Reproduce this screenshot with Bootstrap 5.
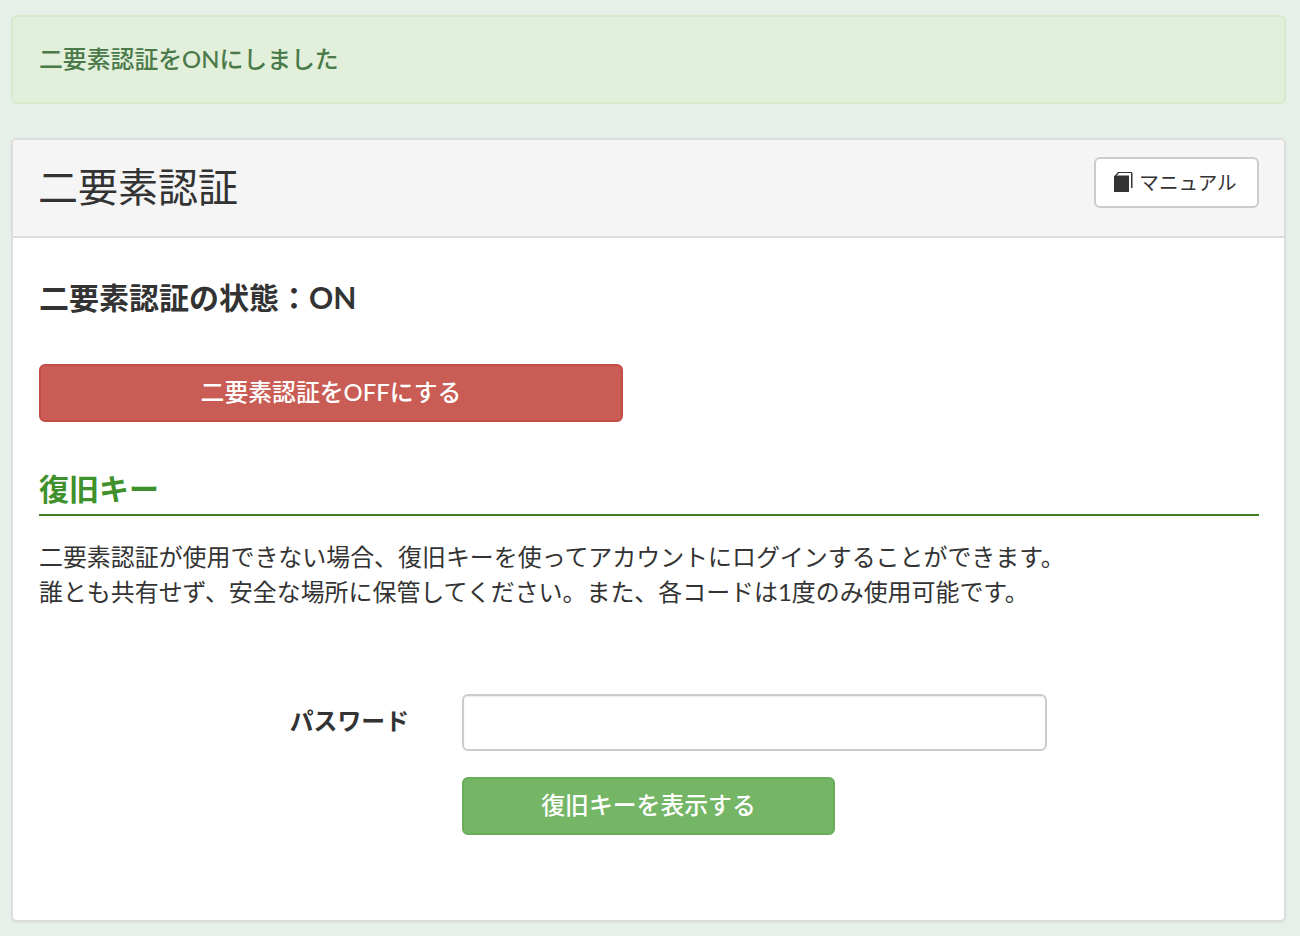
<!DOCTYPE html>
<html lang="ja">
<head>
<meta charset="utf-8">
<title>二要素認証</title>
<link rel="stylesheet" href="https://cdn.jsdelivr.net/npm/bootstrap@5.3.0/dist/css/bootstrap.min.css">
<style>
html,body{height:936px;overflow:hidden}
body{background:#e6f0e8;color:#333;font-family:Lato,"Noto Sans CJK JP",sans-serif;padding:15px 14px 14px 11px}
.notice{background:#e2efda;border:2px solid #d8e8cd;border-radius:6px;color:#4b7a4a;height:89px;padding:0 26px 2px;font-size:23.85px;font-weight:500;margin-bottom:34px;display:flex;align-items:center}
.sheet{background:#fff;border:2px solid #ddd;border-radius:6px;height:784px;box-shadow:0 1px 2px rgba(0,0,0,.05)}
.sheet-head{background:#f5f5f5;border-bottom:2px solid #ddd;height:98px;padding:0 25px;border-radius:4px 4px 0 0}
.sheet-title{font-size:40px;font-weight:400;margin:-2px 0 0;line-height:1}
.manual-btn{width:165px;height:51px;background:#fff;border:2px solid #ccc;border-radius:6px;color:#333;font-size:19.6px;padding:0 2px 0 0;margin-top:-11px;gap:6px}
.manual-icon{margin-top:-2px}
.sheet-body{padding:0 25px 0 26px}
.state-line{font-size:30px;font-weight:700;margin:0;padding-top:38px;line-height:42px;height:81px}
.off-btn{display:block;width:584px;height:58px;margin-top:45px;background:#c95c54;border:2px solid #c14d45;border-radius:6px;color:#fff;font-size:23.85px;font-weight:500;padding:0 0 2px}
.sub-head{color:#3f922b;font-size:30px;font-weight:700;border-bottom:2px solid #3f7f26;margin:45px 0 0;height:49px;line-height:42px}
.guide{font-size:23.95px;line-height:35px;margin:23px 0 0}
.pw-row{margin-top:85px}
.pw-label{width:370px;text-align:right;font-size:23.85px;font-weight:700;margin:-4px 0 0}
.pw-input{width:585px;height:57px;margin-left:53px;border:2px solid #ccc;border-radius:6px;box-shadow:inset 0 1px 2px rgba(0,0,0,.08)}
.go-btn{display:block;width:373px;height:58px;margin:26px 0 0 423px;background:#74b666;border:2px solid #69ad5b;border-radius:6px;color:#fff;font-size:23.85px;font-weight:500;padding:0 0 2px}
</style>
</head>
<body>
<div class="notice" role="alert">二要素認証をONにしました</div>
<div class="sheet">
  <div class="sheet-head d-flex justify-content-between align-items-center">
    <h1 class="sheet-title">二要素認証</h1>
    <a class="manual-btn btn d-flex align-items-center justify-content-center" href="#">
      <svg class="manual-icon" width="19" height="20" viewBox="0 0 19 20" aria-hidden="true"><path fill="#333" d="M0 4.500 4 0h14v1H5L2.500 3.500H15V20H0z"/><path fill="#333" d="M17 1h1.500v15H17z"/></svg>
      <span>マニュアル</span>
    </a>
  </div>
  <div class="sheet-body">
    <p class="state-line">二要素認証の状態：ON</p>
    <button class="off-btn btn" type="button">二要素認証をOFFにする</button>
    <h2 class="sub-head">復旧キー</h2>
    <p class="guide">二要素認証が使用できない場合、復旧キーを使ってアカウントにログインすることができます。<br>誰とも共有せず、安全な場所に保管してください。また、各コードは1度のみ使用可能です。</p>
    <div class="pw-row d-flex align-items-center">
      <label class="pw-label" for="pw">パスワード</label>
      <input class="pw-input form-control" id="pw" type="password">
    </div>
    <button class="go-btn btn" type="button">復旧キーを表示する</button>
  </div>
</div>
<script src="https://cdn.jsdelivr.net/npm/bootstrap@5.3.0/dist/js/bootstrap.bundle.min.js"></script>
</body>
</html>
